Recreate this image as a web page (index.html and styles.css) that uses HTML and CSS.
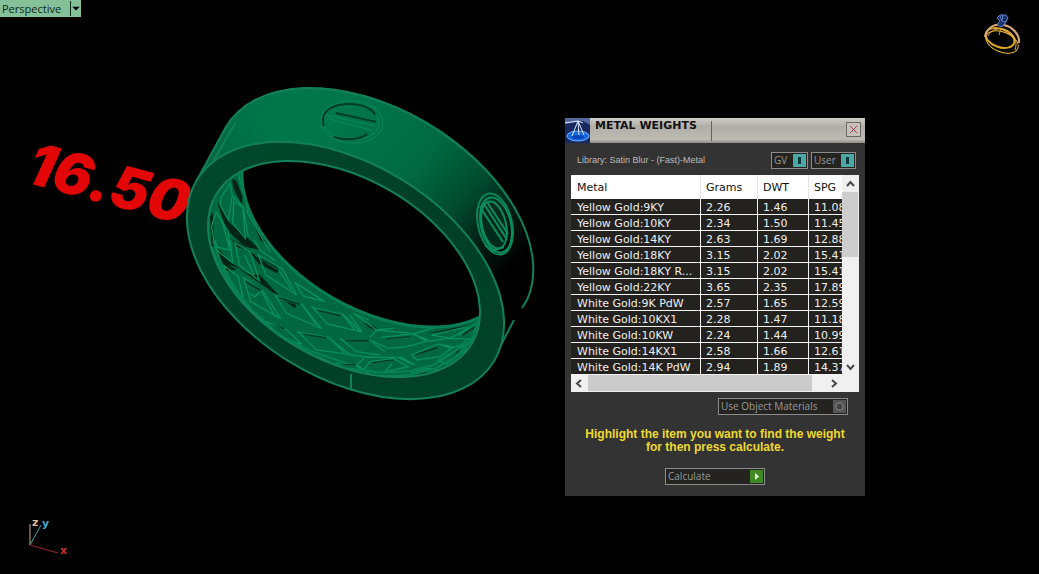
FILE: index.html
```html
<!DOCTYPE html>
<html lang="en">
<head>
<meta charset="utf-8">
<title>Perspective - Metal Weights</title>
<link rel="stylesheet" href="styles.css">
</head>
<body>
<main class="viewport">
  <svg class="scene" viewBox="0 0 1039 574" preserveAspectRatio="xMinYMin meet" role="img" aria-label="Ring model, size 16.50">
    <defs>
      <linearGradient id="band" gradientUnits="userSpaceOnUse" x1="340" y1="110" x2="510" y2="270">
        <stop offset="0" stop-color="#00764c"/>
        <stop offset=".4" stop-color="#006a44"/>
        <stop offset=".65" stop-color="#004a30"/>
        <stop offset=".85" stop-color="#001a11"/>
        <stop offset="1" stop-color="#000"/>
      </linearGradient>
      <linearGradient id="bandLeft" gradientUnits="userSpaceOnUse" x1="200" y1="170" x2="290" y2="110">
        <stop offset="0" stop-color="#005536" stop-opacity=".7"/>
        <stop offset="1" stop-color="#00764c" stop-opacity="0"/>
      </linearGradient>
      <linearGradient id="face" gradientUnits="userSpaceOnUse" x1="190" y1="200" x2="500" y2="340">
        <stop offset="0" stop-color="#00482e"/>
        <stop offset=".5" stop-color="#003f28"/>
        <stop offset="1" stop-color="#004229"/>
      </linearGradient>
      <clipPath id="bore"><ellipse cx="344" cy="269" rx="148" ry="91" transform="rotate(30 344 269)"/></clipPath>
    </defs>

    <text class="size-mark" transform="translate(24 182) rotate(15)">16.50</text>

    <g class="band">
      <path fill="url(#band)" d="M195.500 182.800 225.500 127.800A173.800 106.900 31.400 0 1 525.500 303.200L495.500 358.200Z"/>
      <path fill="url(#bandLeft)" d="M195 183 225 128A174 107 31.400 0 1 317 87L300 142 213 170Z"/>
      <path class="edge" d="M195.500 182.800 225.500 127.800A173.800 106.900 31.400 0 1 527 300L522 308M514 320 501 345M213 161C222 147 229 132 236 123"/>
    </g>

    <ellipse cx="345.500" cy="270.500" rx="174" ry="107" transform="rotate(31.400 345.500 270.500)" fill="url(#face)" class="edge-face"/>

    <g clip-path="url(#bore)">
      <rect x="190" y="150" width="310" height="240" fill="#006840"/>
      <g class="lattice" transform="translate(180 80) scale(.3333)">
        <path class="gap" d="M156 298 168 300 188 350 186 375 160 325ZM112 368 122 378 150 430 210 480 240 510 195 500 140 450ZM90 410 98 395 104 500 95 500ZM198 370 240 440 280 505 240 480Z"/>
        <path class="cell" d="M150 310 125 350 120 375 145 420 157 345ZM162 350 158 430 196 475 188 380ZM108 395 95 440 104 500 150 510 128 430ZM120 415 145 455 150 505M165 365 190 385 205 470M175 280 190 345M196 285 215 400 290 515M186 285 203 400 270 515"/>
      </g>
      <g class="lattice" transform="translate(180 240) scale(.3333)">
        <path class="gap" d="M110 20 150 65 200 100 240 105 300 170 350 190 345 205 240 130 175 85 122 65ZM155 0 178 10 205 30 172 22ZM120 55 150 78 170 90 140 92ZM200 25 230 50 300 90 290 100 235 70Z"/>
        <path class="cell" d="M105 0 115 35 158 68 150 0M165 8 178 75 238 122 210 35ZM222 0 240 30 285 62M235 45 258 105 350 165 308 88ZM190 112 212 185 302 236 250 155ZM285 165 320 220 424 265 365 192ZM345 128 370 168 435 185ZM398 203 442 252 542 275 490 224ZM355 276 410 330 508 343 445 292ZM480 295 530 335 600 345M130 75 150 120 190 180 175 110ZM245 240 320 270 365 312 320 300ZM465 370 530 375 565 398"/>
        <path class="slit" d="M410 208 485 224 482 231 415 215ZM365 279 440 291 438 298 372 286ZM495 297 566 299 566 306 500 305ZM480 370 527 371 524 377 495 377ZM292 168 362 190 360 197 300 178ZM240 50 295 82 290 88 245 60ZM195 120 245 148 240 155 198 130ZM275 250 315 264 310 270Z"/>
        <path class="cell" d="M193 45 222 105M295 88 335 150M245 155 285 230M365 192 410 255M488 224 525 270M445 292 495 340M208 160 225 170 240 155M112 40 140 120 205 205 255 255 330 310M520 220 566 240"/>
        <path class="seam" d="M95 20 130 110 200 200 290 285 380 335 480 380 570 405M100 5 140 115 215 210 300 286 390 332 500 370"/>
      </g>
      <g class="lattice" transform="translate(350 240) scale(.3333)">
        <path class="gap" d="M40 245 75 260 85 270 60 265ZM330 260 370 245 300 275 235 280ZM200 395 240 390 225 402 175 404Z"/>
        <path class="slit" d="M0 298 60 299 55 306 0 306ZM105 293 180 287 190 292 110 299ZM62 364 140 355 138 362 68 371ZM188 342 265 318 262 328 198 347ZM265 360 335 322 325 338 280 362ZM325 285 380 255 375 265 340 288ZM0 370 20 371 15 377 0 377Z"/>
        <path class="cell" d="M0 225 35 275M10 220 80 270 130 265M60 292 80 270 190 280 230 304 170 320 115 325 60 300 105 335M95 292 185 282 235 300M185 345 265 312 310 322 270 350 200 360ZM20 375 45 352 145 352 190 375M60 365 130 355 175 380 95 398 40 390ZM150 350 195 375M245 285 330 265 360 262 300 295ZM190 282 360 230M230 304 300 295 385 298M310 322 375 305M265 362 340 318 350 328 290 372ZM180 400 235 385 265 390M105 395 125 372M20 380 50 395M0 345 60 352M270 312 300 325M325 288 380 248"/>
        <path class="seam" d="M0 398 80 410 180 405 250 388 320 350 365 300 385 240M0 386 90 398 180 393 250 375 310 340 350 300"/>
      </g>
      <ellipse class="hole" cx="378" cy="219" rx="148" ry="91" transform="rotate(30 378 219)"/>
    </g>
    <ellipse class="edge" cx="344" cy="269" rx="148" ry="91" transform="rotate(30 344 269)"/>
    <path class="edge" d="M351 374V390"/>

    <g class="screw" transform="rotate(4 351 122)">
      <ellipse class="rim" cx="352" cy="122" rx="31" ry="21"/>
      <ellipse cx="351" cy="122" rx="28" ry="18"/>
      <path class="shade" d="M324 128C318 110 337 104 351 104C363 104 371 108 375 113M335 138C345 141 359 140 368 133"/>
      <path d="M325 117 375 124M328 120 373 129M335 114 377 119"/>
      <path class="shade" d="M335 114 376 120"/>
    </g>
    <g class="screw small">
      <ellipse class="rim" cx="495" cy="224" rx="17" ry="31" transform="rotate(-13 495 224)"/>
      <ellipse cx="496" cy="225" rx="15" ry="28" transform="rotate(-13 496 225)"/>
      <ellipse class="dark" cx="494" cy="225" rx="12" ry="24" transform="rotate(-13 494 225)"/>
      <path d="M480 207 503 242M484 204 506 238M487 202 508 234M485 245 492 251 504 247"/>
    </g>

    <g class="axes">
      <path stroke="#c8a888" d="M30 524V545"/>
      <path stroke="#4aa0a8" d="M30 545 41 525"/>
      <path stroke="#a02828" d="M30 545 58 553"/>
      <text x="32" y="526" fill="#e0b890">z</text>
      <text x="42" y="527" fill="#48a8c8">y</text>
      <text x="60" y="554" fill="#c83030">x</text>
    </g>
  </svg>

  <button class="view-tab" type="button">
    <span class="view-name">Perspective</span>
    <svg class="view-arrow" viewBox="0 0 10 16" aria-hidden="true"><path d="M1 6H9L5 10Z"/></svg>
  </button>

  <svg class="brand" viewBox="0 0 40 42" aria-hidden="true">
    <g fill="none" stroke="#d9a62c">
      <ellipse cx="18" cy="25" rx="15" ry="9" transform="rotate(20 18 25)" stroke-width="2"/>
      <ellipse cx="20" cy="29" rx="17" ry="10" transform="rotate(22 20 29)" stroke="#efbc3e"/>
      <path d="M3 24C5 14 13 10 22 12C31 14 38 22 37 30" stroke="#d8a878" stroke-width="2"/>
      <path d="M6 23C10 15 21 13 29 20C34 24 35 32 33 37" stroke="#e6a63c"/>
      <path d="M17 22 19 15"/>
    </g>
    <path d="M15 5 18 2H24L26 5 24 9 20 14 15 12 18 8ZM18 3 20 8 24 9M21 2 20 8" fill="#18306c" stroke="#6484d0"/>
  </svg>

  <section class="dialog" aria-labelledby="dialog-title">
    <header class="titlebar">
      <svg class="app-icon" viewBox="0 0 25 25" aria-hidden="true">
        <rect width="25" height="25" fill="#172960"/>
        <path d="M0 0H25V7L18 3 0 6Z" fill="#52699c"/>
        <ellipse cx="13" cy="18" rx="11" ry="5" fill="#1768de" stroke="#7ab4ff"/>
        <path d="M13 3 7 18M13 3 19 17M13 3 14 19M0 5 13 3 18 5" fill="none" stroke="#dbe8ff"/>
        <ellipse cx="13" cy="19" rx="6" ry="2" fill="#0745b8"/>
      </svg>
      <h1 class="title" id="dialog-title">METAL WEIGHTS</h1>
      <span class="grip"></span>
      <button class="close" type="button" aria-label="Close">
        <svg viewBox="0 0 10 10" aria-hidden="true"><path d="M1 1 9 9M9 1 1 9"/></svg>
      </button>
    </header>

    <div class="toolbar">
      <p class="library">Library: Satin Blur - (Fast)-Metal</p>
      <button class="toggle gv" type="button">GV<span class="lamp"></span></button>
      <button class="toggle" type="button">User<span class="lamp"></span></button>
    </div>

    <div class="list">
      <div class="pane">
        <table class="metals">
          <colgroup><col class="c-metal"><col class="c-grams"><col class="c-dwt"><col class="c-spg"></colgroup>
          <thead><tr><th>Metal</th><th>Grams</th><th>DWT</th><th>SPG</th></tr></thead>
          <tbody>
            <tr><td>Yellow Gold:9KY</td><td>2.26</td><td>1.46</td><td>11.08</td></tr>
            <tr><td>Yellow Gold:10KY</td><td>2.34</td><td>1.50</td><td>11.45</td></tr>
            <tr><td>Yellow Gold:14KY</td><td>2.63</td><td>1.69</td><td>12.88</td></tr>
            <tr><td>Yellow Gold:18KY</td><td>3.15</td><td>2.02</td><td>15.41</td></tr>
            <tr><td>Yellow Gold:18KY R...</td><td>3.15</td><td>2.02</td><td>15.41</td></tr>
            <tr><td>Yellow Gold:22KY</td><td>3.65</td><td>2.35</td><td>17.89</td></tr>
            <tr><td>White Gold:9K PdW</td><td>2.57</td><td>1.65</td><td>12.59</td></tr>
            <tr><td>White Gold:10KX1</td><td>2.28</td><td>1.47</td><td>11.18</td></tr>
            <tr><td>White Gold:10KW</td><td>2.24</td><td>1.44</td><td>10.99</td></tr>
            <tr><td>White Gold:14KX1</td><td>2.58</td><td>1.66</td><td>12.61</td></tr>
            <tr><td>White Gold:14K PdW</td><td>2.94</td><td>1.89</td><td>14.37</td></tr>
          </tbody>
        </table>
      </div>
      <div class="vbar">
        <svg class="chev" viewBox="0 0 17 17" aria-hidden="true"><path d="M5 11 8.500 7 12 11"/></svg>
        <span class="vthumb"></span>
        <svg class="chev down" viewBox="0 0 17 17" aria-hidden="true"><path d="M5 7 8.500 11 12 7"/></svg>
      </div>
      <div class="hbar">
        <svg class="chev" viewBox="0 0 17 17" aria-hidden="true"><path d="M10 5 6 8.500 10 12"/></svg>
        <span class="hthumb"></span>
        <svg class="chev end" viewBox="0 0 17 17" aria-hidden="true"><path d="M7 5 11 8.500 7 12"/></svg>
      </div>
    </div>

    <button class="action materials" type="button">Use Object Materials
      <svg class="badge off" viewBox="0 0 13 13" aria-hidden="true"><path d="M5 3H8L10 5V8L8 10H5L3 8V5Z"/></svg>
    </button>
    <p class="hint">Highlight the item you want to find the weight<br>for then press calculate.</p>
    <button class="action calculate" type="button">Calculate
      <svg class="badge go" viewBox="0 0 13 13" aria-hidden="true"><path d="M5 3V10L9 6.500Z"/></svg>
    </button>
  </section>
</main>
</body>
</html>
```
FILE: styles.css
```css
* { box-sizing: border-box; }

body {
  margin: 0;
  background: #000;
  font-family: "DejaVu Sans", Verdana, sans-serif;
  font-size: 11px;
}

button { font: inherit; padding: 0; margin: 0; border-radius: 0; }

.viewport { position: relative; min-height: 100vh; overflow: hidden; }
.scene { display: block; width: 100%; height: 100vh; }

/* model */
.edge { fill: none; stroke: #128058; stroke-width: 2; }
.edge-face { stroke: #128058; stroke-width: 2; }
.size-mark { font: italic 900 58px Inter, "Liberation Sans", sans-serif; fill: #e30606; }
.lattice { stroke-width: 4; }
.gap { fill: #012417; }
.cell { fill: none; stroke: #07905c; }
.slit { fill: #023a26; stroke: #07774c; stroke-width: 2; }
.seam { fill: none; stroke: #058253; stroke-width: 6; }
.hole { fill: #000; stroke: #087f54; stroke-width: 3; }
.screw { fill: none; stroke: #078a58; stroke-width: 1; }
.rim { stroke: #0a8557; }
.shade { stroke: #003d27; stroke-width: 2; }
.small { stroke: #0b8e5e; stroke-width: 2; }
.dark { fill: #002a1b; }
.axes { fill: none; stroke-width: 1; font: bold 11px "DejaVu Sans", sans-serif; }
.axes text { stroke: none; }

/* viewport label */
.view-tab {
  position: absolute;
  left: 0;
  top: 0;
  display: flex;
  align-items: center;
  height: 17px;
  border: 0;
  background: #84c098;
  color: #10281a;
  font: 11px "Open Sans", "Noto Sans", sans-serif;
}
.view-name { padding: 0 9px 0 2px; line-height: 16px; }
.view-arrow { width: 11px; height: 15px; border-left: 1px solid #10281a; fill: #000; }

.brand { position: absolute; right: 17px; top: 13px; width: 40px; height: 42px; }

/* dialog */
.dialog {
  position: absolute;
  left: 565px;
  top: 118px;
  width: 300px;
  display: flex;
  flex-direction: column;
  padding-bottom: 11px;
  background: #333;
}
.titlebar {
  display: flex;
  height: 25px;
  background: linear-gradient(#cfcdc6, #b0aea7 35%, #bdbbb4 85%, #8d8b86);
}
.app-icon { width: 25px; height: 25px; }
.title { width: 106px; margin: 0 0 0 5px; color: #111; font-size: 11px; line-height: 16px; white-space: nowrap; }
.grip { width: 1px; margin: 3px 0 2px 10px; background: #66645f; }
.close {
  display: flex;
  width: 15px;
  height: 15px;
  margin: 4px 4px 0 auto;
  padding: 2px;
  border: 1px solid #6c6a64;
  background: #c4c2ba;
}
.close svg { width: 9px; height: 9px; stroke: #b02a40; }

.toolbar { display: flex; gap: 3px; padding: 9px 9px 0 12px; height: 32px; }
.library {
  flex: 1;
  margin: 0;
  color: #bbb;
  font: 9px/17px "Liberation Sans", Arial, sans-serif;
  white-space: nowrap;
}
.toggle, .action {
  display: flex;
  align-items: center;
  justify-content: space-between;
  height: 17px;
  padding: 0 1px 0 2px;
  border: 1px solid #8c8c8c;
  background: #24231f;
  color: #999;
  font: 10px/15px "Open Sans", "Noto Sans", sans-serif;
  text-align: left;
  white-space: nowrap;
}
.toggle { width: 45px; }
.gv { width: 37px; }
.lamp {
  width: 13px;
  height: 13px;
  background: #4aa8a6 linear-gradient(#123838, #123838) center / 3px 7px no-repeat;
}

.list {
  display: grid;
  grid-template-columns: 1fr 17px;
  grid-template-rows: auto 17px;
  margin: 0 6px;
  background: #f0f0f0;
}
.pane { overflow: hidden; min-width: 0; background: #fff; }
.metals { width: 288px; table-layout: fixed; border-collapse: separate; border-spacing: 0; color: #eee; }
.c-metal { width: 130px; }
.c-grams { width: 57px; }
.c-dwt { width: 51px; }
.c-spg { width: 50px; }
th, td { padding: 0 0 0 6px; text-align: left; white-space: nowrap; font-weight: normal; overflow: hidden; }
th { height: 24px; background: #fff; color: #111; border-right: 1px solid #e4e4e4; }
td { height: 16px; padding-top: 2px; line-height: 13px; background: #23221e; border-bottom: 1px solid #f4f4f4; border-right: 1px solid #f4f4f4; }
th + th, td + td { padding-left: 5px; }
.vbar { display: flex; flex-direction: column; background: #f0f0f0; }
.vthumb { width: 16px; height: 65px; background: #cdcdcd; }
.hbar { grid-column: 1 / 3; display: flex; background: #f0f0f0; }
.hthumb { width: 224px; height: 16px; background: #cbcbcb; }
.chev { width: 17px; height: 17px; fill: none; stroke: #484848; stroke-width: 2; }
.down { margin-top: auto; }
.end { margin-left: 13px; }

.materials { align-self: flex-end; width: 130px; margin: 6px 17px 0 0; }
.calculate { align-self: center; width: 100px; }
.badge { width: 13px; height: 13px; }
.off { background: #55555a; fill: #444; stroke: #888; }
.go { background: #3f8a25; fill: #e8ffd8; }
.hint {
  margin: 13px 0 14px;
  color: #f0d92e;
  font: bold 12px/13px "Liberation Sans", Arial, sans-serif;
  text-align: center;
}
```
